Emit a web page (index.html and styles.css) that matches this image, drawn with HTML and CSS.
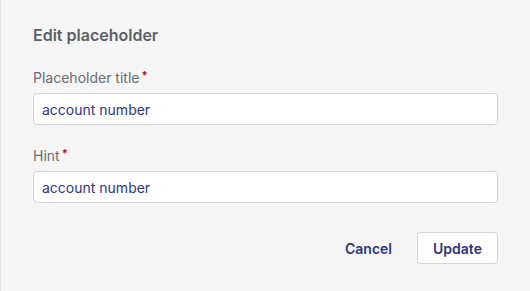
FILE: index.html
```html
<!DOCTYPE html>
<html lang="en">
<head>
  <meta charset="UTF-8" />
  <title>Edit placeholder</title>
  <meta name="viewport" content="width=device-width, initial-scale=1" />
  <link rel="stylesheet" href="styles.css">
</head>
<body>
  <div class="dialog">
    <h2 class="dialog-title">Edit placeholder</h2>

    <div class="field">
      <label for="title">Placeholder title<span class="req">*</span></label>
      <input type="text" id="title" value="account number" />
    </div>

    <div class="field">
      <label for="hint">Hint<span class="req">*</span></label>
      <input type="text" id="hint" value="account number" />
    </div>

    <div class="actions">
      <button class="btn-link">Cancel</button>
      <button class="btn-outline">Update</button>
    </div>
  </div>
</body>
</html>
```

FILE: styles.css
```css
body {
  margin: 0;
  background: #f5f5f5;
  font-family: Inter, "Noto Sans", sans-serif;
}

.dialog {
  width: 530px;
  height: 291px;
  box-sizing: border-box;
  padding: 25px 32px 0 32px;
  border-left: 1px solid #e3e3e6;
}

.dialog-title {
  margin: 0 0 24px;
  font-size: 16px;
  font-weight: 600;
  line-height: 20px;
  color: #5c5f66;
}

.field {
  margin-bottom: 22px;
}

.field label {
  display: block;
  font-size: 14px;
  line-height: 18px;
  color: #6a6d73;
  margin-bottom: 6px;
}

.req {
  position: relative;
  top: -4px;
  margin-left: 2px;
  font-size: 11px;
  line-height: 0;
  font-weight: 700;
  color: #a3142f;
}

.field input {
  display: block;
  width: 100%;
  box-sizing: border-box;
  height: 32px;
  padding: 0 8px;
  border: 1px solid #d3d3d8;
  border-radius: 4px;
  background: #fff;
  font-family: inherit;
  font-size: 14px;
  color: #2f3582;
  outline: none;
}

.actions {
  display: flex;
  justify-content: flex-end;
  align-items: center;
  gap: 25px;
  margin-top: 29px;
}

.actions button {
  font-family: inherit;
  font-size: 14px;
  font-weight: 600;
  color: #2f3582;
  cursor: pointer;
}

.btn-link {
  background: none;
  border: none;
  padding: 0;
}

.btn-outline {
  width: 81px;
  height: 32px;
  background: #fff;
  border: 1px solid #d3d3d8;
  border-radius: 4px;
}
```
